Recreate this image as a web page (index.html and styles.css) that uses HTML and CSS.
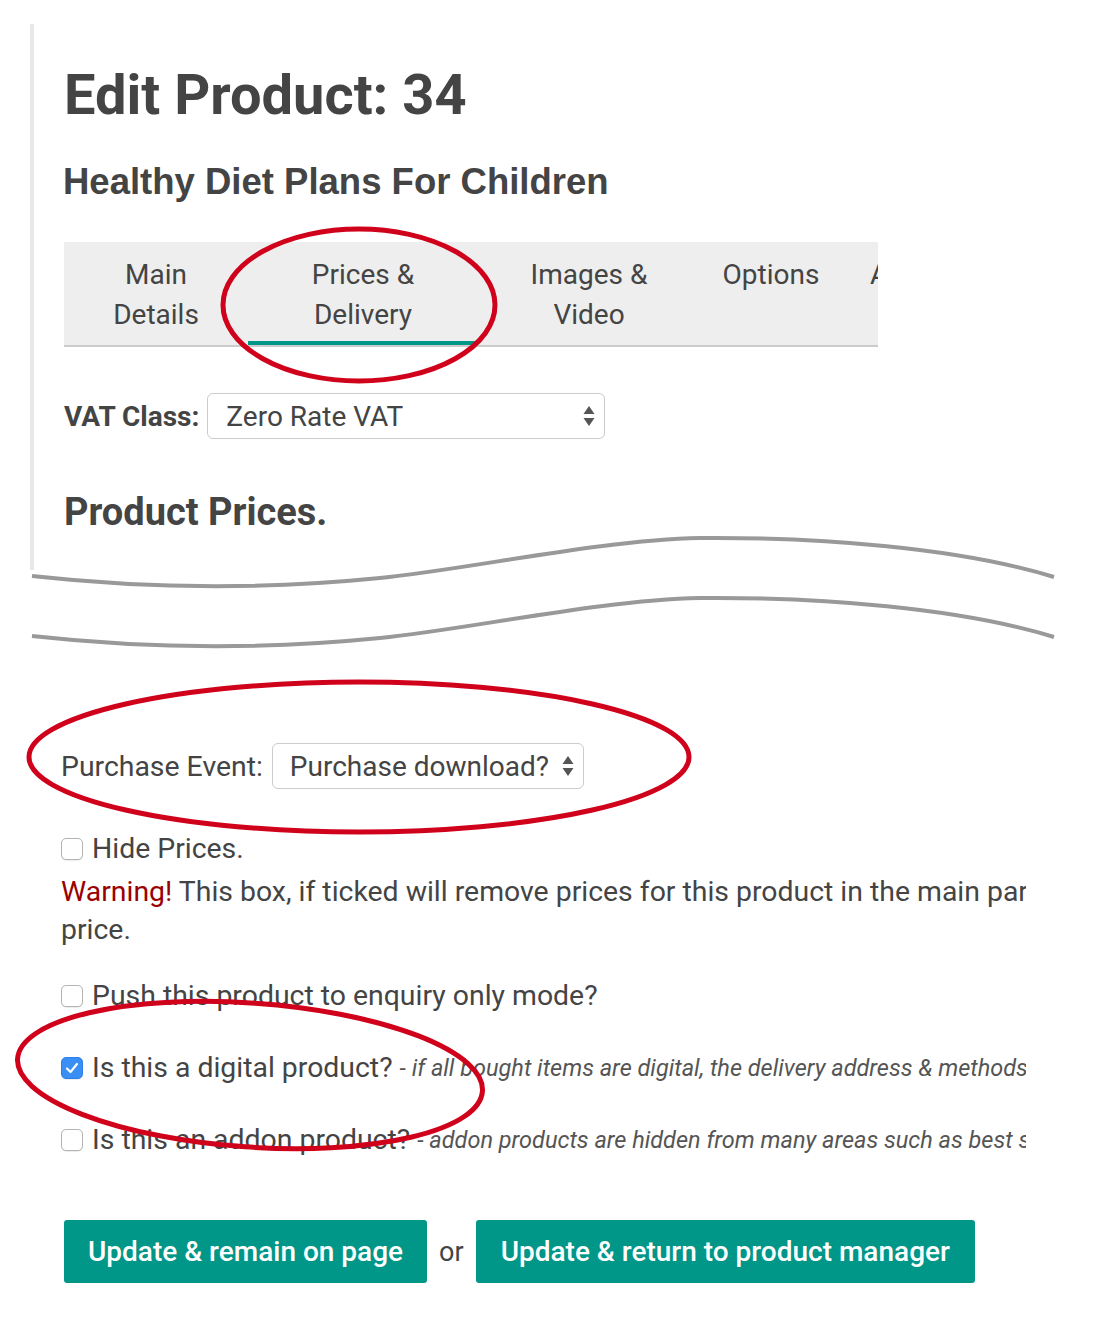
FILE: index.html
```html
<!DOCTYPE html>
<html lang="en">
<head>
<meta charset="utf-8">
<title>Edit Product: 34</title>
<link rel="stylesheet" href="styles.css">
</head>
<body>
<div class="page">
  <div class="top">
    <h1 class="title">Edit Product: 34</h1>
    <h2 class="subtitle">Healthy Diet Plans For Children</h2>
    <nav class="tabs">
      <div class="tab tab-main">Main<br>Details</div>
      <div class="tab tab-prices active">Prices &amp;<br>Delivery</div>
      <div class="tab tab-images">Images &amp;<br>Video</div>
      <div class="tab tab-options">Options</div>
      <div class="tab tab-more">Attributes</div>
    </nav>
    <div class="field vat">
      <span class="label-bold">VAT Class:</span>
      <div class="select select-vat">
        <span>Zero Rate VAT</span>
        <svg class="arrows" width="12" height="22" viewBox="0 0 12 22"><path d="M6 1 L11.5 9 L0.5 9 Z M6 21 L11.5 13 L0.5 13 Z" fill="#555"/></svg>
      </div>
    </div>
    <h3 class="section-title">Product Prices.</h3>
  </div>

  <svg class="break" width="1110" height="128" viewBox="0 0 1110 128">
    <rect x="30" y="0" width="4" height="38" fill="#e8e8e8"/>
    <path d="M32 44 C140 56 260 58 380 46 C470 37 600 8 700 6 C820 5 960 16 1054 45" fill="none" stroke="#999" stroke-width="4"/>
    <path d="M32 104 C140 116 260 118 380 106 C470 97 600 68 700 66 C820 65 960 76 1054 105" fill="none" stroke="#999" stroke-width="4"/>
  </svg>

  <div class="lower">
    <div class="field purchase">
      <span class="label">Purchase Event:</span>
      <div class="select select-purchase">
        <span>Purchase download?</span>
        <svg class="arrows" width="12" height="22" viewBox="0 0 12 22"><path d="M6 1 L11.5 9 L0.5 9 Z M6 21 L11.5 13 L0.5 13 Z" fill="#555"/></svg>
      </div>
    </div>

    <div class="check-row hide-row">
      <span class="checkbox"></span>
      <span class="check-label">Hide Prices.</span>
    </div>
    <p class="warning"><span class="warn">Warning!</span> This box, if ticked will remove prices for this product in the main part<br>price.</p>

    <div class="check-row push-row">
      <span class="checkbox"></span>
      <span class="check-label">Push this product to enquiry only mode?</span>
    </div>
    <div class="check-row digital-row">
      <span class="checkbox checked"><svg width="14" height="12" viewBox="0 0 14 12"><path d="M2 6.5 L5.5 10 L12 2" fill="none" stroke="#fff" stroke-width="2.2" stroke-linecap="round" stroke-linejoin="round"/></svg></span>
      <span class="check-label">Is this a digital product?</span>
      <span class="note">- if all bought items are digital, the delivery address &amp; methods</span>
    </div>
    <div class="check-row addon-row">
      <span class="checkbox"></span>
      <span class="check-label">Is this an addon product?</span>
      <span class="note">- addon products are hidden from many areas such as best s</span>
    </div>
  </div>

  <div class="actions">
    <button class="btn">Update &amp; remain on page</button>
    <span class="or">or</span>
    <button class="btn">Update &amp; return to product manager</button>
  </div>

  <svg class="annotations" width="1110" height="1332" viewBox="0 0 1110 1332">
    <ellipse cx="359" cy="305" rx="136" ry="76" fill="none" stroke="#d0021b" stroke-width="5"/>
    <ellipse cx="359" cy="757" rx="330" ry="75" fill="none" stroke="#d0021b" stroke-width="5"/>
    <ellipse cx="250" cy="1075" rx="233" ry="72" transform="rotate(4 250 1075)" fill="none" stroke="#d0021b" stroke-width="5"/>
  </svg>
</div>
</body>
</html>
```

FILE: styles.css
```css
* { box-sizing: border-box; }

html, body {
  margin: 0;
  padding: 0;
  background: #fff;
}

body {
  font-family: Roboto, "Liberation Sans", Arial, sans-serif;
  color: #444;
  width: 1110px;
  height: 1332px;
  overflow: hidden;
}

.page {
  position: relative;
  width: 1110px;
  height: 1332px;
  padding-top: 24px;
}

.top {
  margin-left: 30px;
  border-left: 4px solid #e8e8e8;
  padding-left: 30px;
  padding-top: 36px;
  height: 508px;
}

.title {
  margin: 0;
  font-size: 56px;
  line-height: 70px;
  font-weight: 700;
  color: #444;
}

.subtitle {
  margin: 30px 0 0 -1px;
  font-family: "Liberation Sans", Arial, sans-serif;
  font-size: 36.5px;
  line-height: 44px;
  font-weight: 700;
  color: #444;
}

.tabs {
  margin-top: 38px;
  width: 814px;
  height: 105px;
  background: #eee;
  border-bottom: 2px solid #ccc;
  display: flex;
  overflow: hidden;
}

.tab {
  flex: none;
  height: 103px;
  padding-top: 13px;
  font-size: 28px;
  line-height: 40px;
  text-align: center;
  color: #444;
  white-space: nowrap;
}

.tab-main { width: 184px; }
.tab-prices { width: 230px; }
.tab-images { width: 222px; }
.tab-options { width: 142px; }
.tab-more { width: 160px; text-align: left; padding-left: 28px; }

.tab.active {
  box-shadow: inset 0 -4px 0 #009688;
}

.field {
  display: flex;
  align-items: center;
  gap: 8px;
}

.vat {
  margin-top: 46px;
  height: 46px;
}

.label-bold {
  font-size: 28px;
  font-weight: 700;
}

.label {
  font-size: 28.4px;
}

.select {
  height: 46px;
  border: 1px solid #ccc;
  border-radius: 6px;
  background: #fff;
  display: flex;
  align-items: center;
  justify-content: space-between;
  font-size: 28px;
  color: #444;
  padding: 0 9px 0 18px;
}

.select-vat { width: 398px; }
.select-purchase { width: 312px; padding-left: 17px; padding-right: 9px; }

.section-title {
  margin: 53px 0 0 0;
  font-size: 38px;
  line-height: 40px;
  font-weight: 700;
  color: #444;
}

.break {
  display: block;
  margin-top: 0;
}

.lower {
  margin-left: 61px;
  width: 965px;
  overflow: hidden;
  padding-top: 83px;
}

.purchase {
  height: 46px;
  gap: 9px;
}

.check-row {
  display: flex;
  align-items: center;
  height: 38px;
  white-space: nowrap;
  font-size: 28.4px;
  line-height: 38px;
}

.hide-row { margin-top: 41px; }
.push-row { margin-top: 28px; }
.digital-row, .addon-row { margin-top: 34px; }

.checkbox {
  flex: none;
  width: 22px;
  height: 22px;
  border: 1px solid #b3b3b3;
  border-radius: 5px;
  background: #fff;
  box-shadow: 0 1px 1px rgba(0,0,0,0.08);
  margin-right: 9px;
  display: flex;
  align-items: center;
  justify-content: center;
}

.checkbox.checked {
  background: #3a8ff5;
  border-color: #2f7fe6;
}

.note {
  font-size: 23.5px;
  font-style: italic;
  color: #555;
  margin-left: 7px;
}

.warning {
  margin: 5px 0 0 0;
  font-size: 28.4px;
  line-height: 38px;
  white-space: nowrap;
}

.warn {
  color: #9b0000;
}

.actions {
  margin-top: 61px;
  margin-left: 64px;
  display: flex;
  align-items: center;
  gap: 12px;
}

.btn {
  height: 63px;
  border: none;
  border-radius: 3px;
  background: #009688;
  color: #fff;
  font-family: Roboto, "Liberation Sans", Arial, sans-serif;
  font-size: 28px;
  font-weight: 500;
  padding: 0 24px;
}

.btn + .or + .btn {
  padding: 0 25px;
}

.or {
  font-size: 27px;
  color: #444;
}

.annotations {
  position: absolute;
  top: 0;
  left: 0;
  pointer-events: none;
}
```
